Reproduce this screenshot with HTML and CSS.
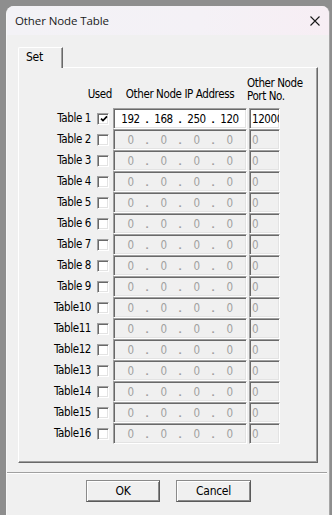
FILE: index.html
```html
<!DOCTYPE html>
<html>
<head>
<meta charset="utf-8">
<link rel="stylesheet" href="styles.css">
</head>
<body>
<div class="window">
  <div class="titlebar">
    <span class="title">Other Node Table</span>
    <svg class="close" width="10" height="10" viewBox="0 0 10 10"><path d="M0.5 0.5 L9.5 9.5 M9.5 0.5 L0.5 9.5" stroke="#1a1a1a" stroke-width="1.1" fill="none"/></svg>
  </div>
  <div class="client">
    <div class="tabs"><div class="tab">Set</div></div>
    <div class="panel">
      <div class="head">
        <div class="h-used">Used</div>
        <div class="h-ip">Other Node IP Address</div>
        <div class="h-port"><div>Other Node</div><div>Port No.</div></div>
      </div>
      <div class="rows">
        <div class="row"><span class="lbl">Table 1</span><span class="chk"><svg width="8" height="8" viewBox="0 0 8 8"><path d="M1 3.6 L3 5.6 L7 1.4" stroke="#000" stroke-width="1.7" fill="none"/></svg></span><span class="ip on"><span class="seg">192</span><span class="dot">.</span><span class="seg">168</span><span class="dot">.</span><span class="seg">250</span><span class="dot">.</span><span class="seg">120</span></span><span class="port on">12000</span></div>
        <div class="row"><span class="lbl">Table 2</span><span class="chk"></span><span class="ip"><span class="seg">0</span><span class="dot">.</span><span class="seg">0</span><span class="dot">.</span><span class="seg">0</span><span class="dot">.</span><span class="seg">0</span></span><span class="port">0</span></div>
        <div class="row"><span class="lbl">Table 3</span><span class="chk"></span><span class="ip"><span class="seg">0</span><span class="dot">.</span><span class="seg">0</span><span class="dot">.</span><span class="seg">0</span><span class="dot">.</span><span class="seg">0</span></span><span class="port">0</span></div>
        <div class="row"><span class="lbl">Table 4</span><span class="chk"></span><span class="ip"><span class="seg">0</span><span class="dot">.</span><span class="seg">0</span><span class="dot">.</span><span class="seg">0</span><span class="dot">.</span><span class="seg">0</span></span><span class="port">0</span></div>
        <div class="row"><span class="lbl">Table 5</span><span class="chk"></span><span class="ip"><span class="seg">0</span><span class="dot">.</span><span class="seg">0</span><span class="dot">.</span><span class="seg">0</span><span class="dot">.</span><span class="seg">0</span></span><span class="port">0</span></div>
        <div class="row"><span class="lbl">Table 6</span><span class="chk"></span><span class="ip"><span class="seg">0</span><span class="dot">.</span><span class="seg">0</span><span class="dot">.</span><span class="seg">0</span><span class="dot">.</span><span class="seg">0</span></span><span class="port">0</span></div>
        <div class="row"><span class="lbl">Table 7</span><span class="chk"></span><span class="ip"><span class="seg">0</span><span class="dot">.</span><span class="seg">0</span><span class="dot">.</span><span class="seg">0</span><span class="dot">.</span><span class="seg">0</span></span><span class="port">0</span></div>
        <div class="row"><span class="lbl">Table 8</span><span class="chk"></span><span class="ip"><span class="seg">0</span><span class="dot">.</span><span class="seg">0</span><span class="dot">.</span><span class="seg">0</span><span class="dot">.</span><span class="seg">0</span></span><span class="port">0</span></div>
        <div class="row"><span class="lbl">Table 9</span><span class="chk"></span><span class="ip"><span class="seg">0</span><span class="dot">.</span><span class="seg">0</span><span class="dot">.</span><span class="seg">0</span><span class="dot">.</span><span class="seg">0</span></span><span class="port">0</span></div>
        <div class="row"><span class="lbl">Table10</span><span class="chk"></span><span class="ip"><span class="seg">0</span><span class="dot">.</span><span class="seg">0</span><span class="dot">.</span><span class="seg">0</span><span class="dot">.</span><span class="seg">0</span></span><span class="port">0</span></div>
        <div class="row"><span class="lbl">Table11</span><span class="chk"></span><span class="ip"><span class="seg">0</span><span class="dot">.</span><span class="seg">0</span><span class="dot">.</span><span class="seg">0</span><span class="dot">.</span><span class="seg">0</span></span><span class="port">0</span></div>
        <div class="row"><span class="lbl">Table12</span><span class="chk"></span><span class="ip"><span class="seg">0</span><span class="dot">.</span><span class="seg">0</span><span class="dot">.</span><span class="seg">0</span><span class="dot">.</span><span class="seg">0</span></span><span class="port">0</span></div>
        <div class="row"><span class="lbl">Table13</span><span class="chk"></span><span class="ip"><span class="seg">0</span><span class="dot">.</span><span class="seg">0</span><span class="dot">.</span><span class="seg">0</span><span class="dot">.</span><span class="seg">0</span></span><span class="port">0</span></div>
        <div class="row"><span class="lbl">Table14</span><span class="chk"></span><span class="ip"><span class="seg">0</span><span class="dot">.</span><span class="seg">0</span><span class="dot">.</span><span class="seg">0</span><span class="dot">.</span><span class="seg">0</span></span><span class="port">0</span></div>
        <div class="row"><span class="lbl">Table15</span><span class="chk"></span><span class="ip"><span class="seg">0</span><span class="dot">.</span><span class="seg">0</span><span class="dot">.</span><span class="seg">0</span><span class="dot">.</span><span class="seg">0</span></span><span class="port">0</span></div>
        <div class="row"><span class="lbl">Table16</span><span class="chk"></span><span class="ip"><span class="seg">0</span><span class="dot">.</span><span class="seg">0</span><span class="dot">.</span><span class="seg">0</span><span class="dot">.</span><span class="seg">0</span></span><span class="port">0</span></div>
      </div>
    </div>
    <div class="sep"></div>
    <div class="buttons">
      <button class="btn ok">OK</button>
      <button class="btn cancel">Cancel</button>
    </div>
  </div>
</div>
</body>
</html>
```

FILE: styles.css
```css
html, body {
  margin: 0;
  padding: 0;
  height: 515px;
  overflow: hidden;
}
body {
  background: #8e8e8e;
  font-family: "DejaVu Sans Condensed", "Liberation Sans", sans-serif;
  font-size: 11.5px;
  letter-spacing: -0.4px;
  color: #000;
}
.window {
  box-sizing: border-box;
  margin: 6px 0 0 6px;
  width: 324px;
  height: 509px;
  background: #f0f0f0;
  border-left: 1px solid #f8f8f8;
  border-right: 1px solid #a6a6a6;
  border-radius: 8px 8px 0 0;
  overflow: hidden;
}
.titlebar {
  height: 29px;
  display: flex;
  align-items: center;
  justify-content: space-between;
  padding: 0 9px 0 8px;
  background: linear-gradient(90deg, #f3f2f6 0%, #f4f1f6 60%, #f7eef4 100%);
}
.title {
  font-family: "Open Sans", "Noto Sans", sans-serif;
  font-size: 11.5px;
  letter-spacing: -0.1px;
  color: #1a1a1a;
}
.close {
  display: block;
}
.client {
  padding: 12px 0 0 0;
}
.tabs {
  display: flex;
  margin-left: 11px;
}
.tab {
  position: relative;
  z-index: 1;
  box-sizing: border-box;
  width: 45px;
  height: 21px;
  margin-bottom: -1px;
  padding: 2px 0 0 7px;
  line-height: 14px;
  font-size: 12px;
  letter-spacing: -0.3px;
  background: #f0f0f0;
  border-top: 1px solid #ffffff;
  border-left: 1px solid #ffffff;
  border-right: 1px solid #696969;
  box-shadow: inset -1px 0 0 #a0a0a0;
  border-top-left-radius: 2px;
}
.panel {
  box-sizing: border-box;
  width: 300px;
  height: 396px;
  margin-left: 11px;
  padding-top: 9px;
  border-top: 1px solid #ffffff;
  border-left: 1px solid #ffffff;
  border-right: 1px solid #696969;
  border-bottom: 1px solid #696969;
  box-shadow: inset -1px -1px 0 #a0a0a0;
}
.head {
  display: flex;
  align-items: flex-end;
  height: 26px;
  margin-bottom: 5px;
  line-height: 13px;
  white-space: nowrap;
}
.h-used {
  width: 93px;
  text-align: right;
  margin-bottom: 2px;
  padding-right: 1px;
}
.h-ip {
  width: 134px;
  text-align: center;
  margin-bottom: 2px;
}
.h-port {
  display: flex;
  flex-direction: column;
}
.rows {
  display: flex;
  flex-direction: column;
}
.row {
  display: flex;
  align-items: center;
  height: 21px;
}
.lbl {
  width: 72px;
  text-align: right;
  line-height: 21px;
  white-space: nowrap;
}
.chk {
  box-sizing: border-box;
  width: 12px;
  height: 12px;
  margin-left: 6px;
  background: #ffffff;
  border-top: 1px solid #a0a0a0;
  border-left: 1px solid #a0a0a0;
  border-bottom: 1px solid #ffffff;
  border-right: 1px solid #ffffff;
  box-shadow: inset 1px 1px 0 #696969, inset -1px -1px 0 #e3e3e3;
  display: flex;
  align-items: center;
  justify-content: center;
  padding: 1px 0 0 1px;
}
.chk svg {
  display: block;
}
.ip, .port {
  box-sizing: border-box;
  height: 21px;
  border-top: 1px solid #a0a0a0;
  border-left: 1px solid #a0a0a0;
  border-bottom: 1px solid #ffffff;
  border-right: 1px solid #ffffff;
  box-shadow: inset 1px 1px 0 #696969, inset -1px -1px 0 #e3e3e3;
  padding: 1px;
  line-height: 18px;
  color: #a0a0a0;
  background: #f0f0f0;
}
.ip {
  width: 134px;
  margin-left: 4px;
  display: flex;
  padding-left: 2px;
  padding-right: 2px;
}
.port {
  width: 31px;
  margin-left: 2px;
  padding-left: 2px;
  overflow: hidden;
  white-space: nowrap;
}
.ip.on, .port.on {
  background: #ffffff;
  color: #000;
}
.seg {
  flex: 1;
  text-align: center;
}
.dot {
  width: 4px;
  text-align: center;
  font-weight: bold;
  font-family: "Liberation Sans", sans-serif;
}
.sep {
  margin: 9px 2px 0 0;
  height: 1px;
  background: #a0a0a0;
  border-bottom: 1px solid #ffffff;
}
.buttons {
  display: flex;
  gap: 16px;
  padding-left: 79px;
  margin-top: 6px;
}
.btn {
  box-sizing: border-box;
  height: 22px;
  padding: 0;
  margin: 0;
  font-family: inherit;
  font-size: 12px;
  letter-spacing: -0.3px;
  color: #000;
  background: #f0f0f0;
  border-top: 1px solid #8a8a8a;
  border-left: 1px solid #8a8a8a;
  border-right: 1px solid #5a5a5a;
  border-bottom: 1px solid #5a5a5a;
  box-shadow: inset 1px 1px 0 #ffffff, inset -1px -1px 0 #8a8a8a;
  border-radius: 0;
}
.ok {
  width: 74px;
}
.cancel {
  width: 75px;
}
```
